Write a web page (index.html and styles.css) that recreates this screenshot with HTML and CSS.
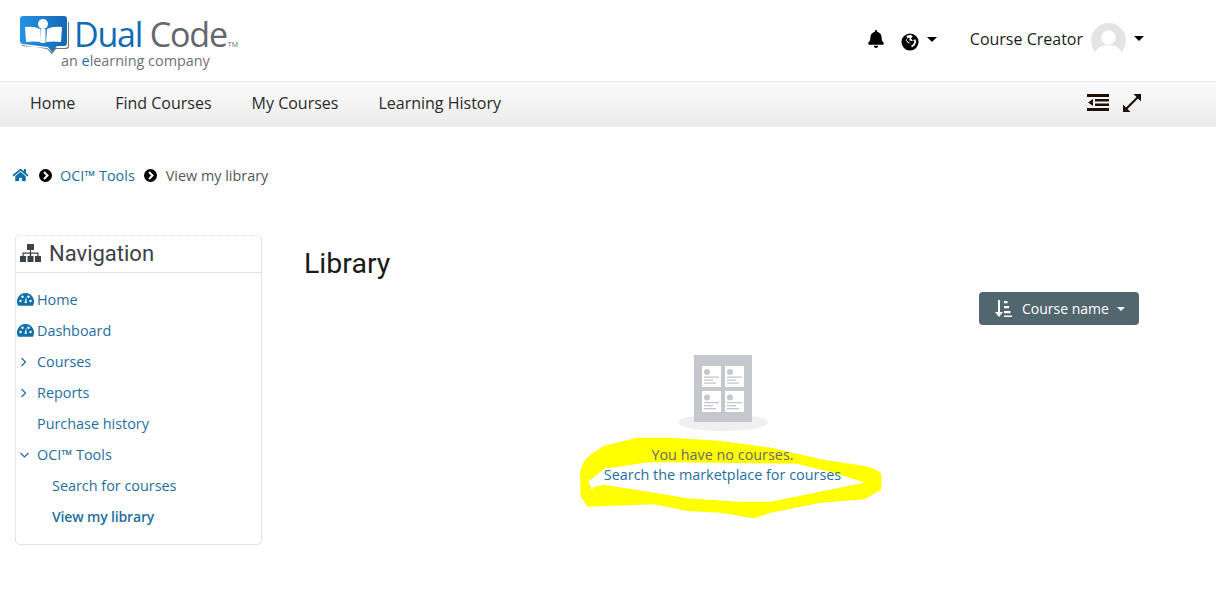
FILE: index.html
```html
<!DOCTYPE html>
<html lang="en">
<head>
    <meta charset="UTF-8">
    <title>Library</title>
    <link rel="stylesheet" href="styles.css">
</head>
<body>
    <header class="top-bar">
        <a class="logo">
            <svg class="logo-icon" width="50" height="40" viewBox="0 0 50 40">
                <defs>
                    <linearGradient id="logoBlue" x1="0" y1="0" x2="1" y2="0">
                        <stop offset="0" stop-color="#2393e6"/>
                        <stop offset="1" stop-color="#1468b4"/>
                    </linearGradient>
                </defs>
                <path d="M2 29l25 4 5 5 4-5h10q3 0 3-3V6h-1v23q0 3-3 3H35l-3 4-5-4-25-2z" fill="#6f7378"/>
                <path d="M3 0h41q3 0 3 3v24q0 3-3 3H37l-5 6-4-5L3 28q-3 0-3-3V3q0-3 3-3z" fill="url(#logoBlue)"/>
                <circle cx="23" cy="8" r="5" fill="#fff"/>
                <path d="M5 11q9-1 15 2l1 13q-7-1-15 0zM42 11q-9-1-15 2l-1 13q7-1 15 0z" fill="#fff"/>
                <path d="M20.500 13h5v14h-5z" fill="#fff"/>
            </svg>
            <span class="logo-text">
                <span class="logo-name"><span class="logo-dual">Dual</span> Code<span class="logo-tm">TM</span></span>
                <span class="logo-sub">an <b>e</b>learning company</span>
            </span>
        </a>
        <div class="user-tools">
            <svg class="bell" width="16" height="18" viewBox="0 0 448 512"><path d="M224 512c35 0 64-29 64-64H160c0 35 29 64 64 64zm215-150c-19-21-56-52-56-154 0-78-54-140-127-155V32a32 32 0 1 0-64 0v21C119 68 65 130 65 208c0 102-37 133-56 154-6 6-9 14-9 22 0 16 13 32 32 32h384c19 0 32-16 32-32 0-8-3-16-9-22z" fill="#000"/></svg>
            <svg class="globe" width="18" height="18" viewBox="0 0 20 20">
                <circle cx="10" cy="10" r="9.500" fill="#000"/>
                <path d="M6 3l5-1 2 2-2 2 2 2 3-1 1 3-2 4-3 2-1-4-3-1-3-3 2-2z" fill="#fff"/>
                <path d="M8 5l2 1-1 2 3 1 2-1 1 2-2 3-2 1-1-3-3-2-1-1z" fill="#000"/>
            </svg>
            <span class="caret caret-lang"></span>
            <span class="user-name">Course Creator</span>
            <svg class="avatar" width="35" height="35" viewBox="0 0 36 36">
                <defs><clipPath id="avatarClip"><circle cx="18" cy="18" r="18"/></clipPath></defs>
                <g clip-path="url(#avatarClip)">
                    <rect width="36" height="36" fill="#e4e4e4"/>
                    <circle cx="18" cy="15" r="7.500" fill="#fff"/>
                    <path d="M3 36q1-13 15-13t15 13z" fill="#fff"/>
                </g>
            </svg>
            <span class="caret caret-user"></span>
        </div>
    </header>

    <nav class="main-nav">
        <a>Home</a>
        <a>Find Courses</a>
        <a>My Courses</a>
        <a>Learning History</a>
        <div class="nav-tools">
            <svg width="22" height="17" viewBox="0 0 22 17"><path d="M0 0h22v3H0zM8 5h14v2.500H8zM8 9.500h14V12H8zM0 14h22v3H0zM6 5v7L1 8.500z" fill="#1c1008"/></svg>
            <svg width="18" height="18" viewBox="0 0 18 18"><path d="M10.500 0H18v7.500zM0 10.500V18h7.500z" fill="#1c1008"/><path d="M15 3L3 15" stroke="#1c1008" stroke-width="2.200"/></svg>
        </div>
    </nav>

    <div class="breadcrumb">
        <svg class="home-icon" width="17" height="14" viewBox="0 0 576 512"><path d="M280 148L96 300v164a16 16 0 0 0 16 16l112-1a16 16 0 0 0 16-16v-95a16 16 0 0 1 16-16h64a16 16 0 0 1 16 16v95a16 16 0 0 0 16 16l112 1a16 16 0 0 0 16-16V300L296 148a12 12 0 0 0-16 0zm292 103l-84-69V44a12 12 0 0 0-12-12h-56a12 12 0 0 0-12 12v72l-89-74a48 48 0 0 0-61 0L4 251a12 12 0 0 0-2 17l26 31a12 12 0 0 0 17 2L280 107a12 12 0 0 1 16 0l235 194a12 12 0 0 0 17 2l26-31a12 12 0 0 0-2-17z" fill="#0f6fa8"/></svg>
        <svg class="crumb-sep" width="13" height="13" viewBox="0 0 13 13"><circle cx="6.500" cy="6.500" r="6.500" fill="#000"/><path d="M5 3l3.500 3.500L5 10" fill="none" stroke="#fff" stroke-width="2"/></svg>
        <a>OCI™ Tools</a>
        <svg class="crumb-sep" width="13" height="13" viewBox="0 0 13 13"><circle cx="6.500" cy="6.500" r="6.500" fill="#000"/><path d="M5 3l3.500 3.500L5 10" fill="none" stroke="#fff" stroke-width="2"/></svg>
        <span>View my library</span>
    </div>

    <div class="page-body">
        <aside class="nav-card">
            <h2 class="nav-title">
                <svg width="21" height="18" viewBox="0 0 21 18"><path d="M7 0h7v6h-3v2.500h7.500V12H20.500h.5v6h-6v-6h2.300V9.800h-6.100V12H13.500v6h-6v-6h2.200V9.800H3.700V12H6v6H0v-6h2.500V8.500H10V6H7z" fill="#3d4148"/></svg>
                Navigation
            </h2>
            <ul class="nav-tree">
                <li>
                    <svg class="tree-icon" width="17" height="13" viewBox="0 0 17 13"><path d="M8.500 0A8.500 8.500 0 0 0 1.200 12.800h14.600A8.500 8.500 0 0 0 8.500 0z" fill="#0f6fa8"/><circle cx="3.500" cy="8" r="1.200" fill="#fff"/><circle cx="5.500" cy="3.800" r="1.200" fill="#fff"/><circle cx="11.500" cy="3.800" r="1.200" fill="#fff"/><circle cx="13.500" cy="8" r="1.200" fill="#fff"/><path d="M9.200 3.500l.5 6.500H7.500z" fill="#fff"/></svg>
                    <a>Home</a>
                </li>
                <li>
                    <svg class="tree-icon" width="17" height="13" viewBox="0 0 17 13"><path d="M8.500 0A8.500 8.500 0 0 0 1.200 12.800h14.600A8.500 8.500 0 0 0 8.500 0z" fill="#0f6fa8"/><circle cx="3.500" cy="8" r="1.200" fill="#fff"/><circle cx="5.500" cy="3.800" r="1.200" fill="#fff"/><circle cx="11.500" cy="3.800" r="1.200" fill="#fff"/><circle cx="13.500" cy="8" r="1.200" fill="#fff"/><path d="M9.200 3.500l.5 6.500H7.500z" fill="#fff"/></svg>
                    <a>Dashboard</a>
                </li>
                <li>
                    <svg class="tree-arrow" width="17" height="10" viewBox="0 0 17 10"><path d="M4.500 1l4 4-4 4" fill="none" stroke="#1f6f9f" stroke-width="1.200"/></svg>
                    <a>Courses</a>
                </li>
                <li>
                    <svg class="tree-arrow" width="17" height="10" viewBox="0 0 17 10"><path d="M4.500 1l4 4-4 4" fill="none" stroke="#1f6f9f" stroke-width="1.200"/></svg>
                    <a>Reports</a>
                </li>
                <li class="no-icon"><a>Purchase history</a></li>
                <li>
                    <svg class="tree-arrow" width="17" height="10" viewBox="0 0 17 10"><path d="M3.500 3l4 4 4-4" fill="none" stroke="#1f6f9f" stroke-width="1.200"/></svg>
                    <a>OCI™ Tools</a>
                </li>
                <li class="sub"><a>Search for courses</a></li>
                <li class="sub active"><a>View my library</a></li>
            </ul>
        </aside>

        <main class="content">
            <h1>Library</h1>
            <div class="toolbar">
                <button class="sort-btn">
                    <svg width="18" height="18" viewBox="0 0 18 18"><path d="M4 0h2v12h3l-4 5-4-5h3zM10 1h3.500v2.200H10zM10 6h5v2.200h-5zM10 11h6.500v2.200H10zM10 15.500h8V17h-8z" fill="#fff"/></svg>
                    Course name
                    <span class="caret caret-btn"></span>
                </button>
            </div>
            <div class="empty-state">
                <svg class="empty-pic" width="90" height="76" viewBox="0 0 90 76">
                    <ellipse cx="45" cy="67.500" rx="45" ry="8.500" fill="#efefef"/>
                    <rect x="16" y="0" width="58" height="67" fill="#c4c7cc"/>
                    <rect x="24" y="11" width="19" height="21" fill="#fff"/>
                    <rect x="47" y="11" width="19" height="21" fill="#fff"/>
                    <rect x="24" y="36" width="19" height="21" fill="#fff"/>
                    <rect x="47" y="36" width="19" height="21" fill="#fff"/>
                    <g fill="#c4c7cc">
                        <circle cx="29" cy="17" r="3"/><rect x="26" y="21.500" width="15" height="1.300"/><rect x="26" y="24.500" width="9" height="1.300"/><rect x="26" y="27.500" width="12" height="1.300"/>
                        <circle cx="52" cy="17" r="3"/><rect x="49" y="21.500" width="15" height="1.300"/><rect x="49" y="24.500" width="9" height="1.300"/><rect x="49" y="27.500" width="12" height="1.300"/>
                        <circle cx="29" cy="42.500" r="3"/><rect x="26" y="47" width="15" height="1.300"/><rect x="26" y="50" width="9" height="1.300"/><rect x="26" y="53" width="12" height="1.300"/>
                        <circle cx="52" cy="42.500" r="3"/><rect x="49" y="47" width="15" height="1.300"/><rect x="49" y="50" width="9" height="1.300"/><rect x="49" y="53" width="12" height="1.300"/>
                    </g>
                </svg>
                <div class="empty-text">
                    <svg class="highlight" width="302" height="82" viewBox="28 293 906 246"><path fill-rule="evenodd" d="M31 400Q38 365 63 347L102 322 200 298H300L450 308 600 328 750 363 880 383Q922 392 929 406V449L880 477 750 487 600 517 550 534 450 517 350 512 250 492 100 497 52 499 33 470zM50 425L65 465 70 445 100 440 200 455 350 480 500 490H600L700 470 800 450 895 430 780 395 680 370 240 365 100 385z" fill="#ffff00" stroke="#ffff00" stroke-width="6" stroke-linejoin="round"/></svg>
                    <p>You have no courses.</p>
                    <a>Search the marketplace for courses</a>
                </div>
            </div>
        </main>
    </div>
</body>
</html>
```

FILE: styles.css
```css
* {
    box-sizing: border-box;
}
body {
    margin: 0;
    background-color: #fff;
    font-family: "Open Sans", sans-serif;
    font-size: 14.4px;
    color: #333;
}
a {
    color: #1f6f9f;
    text-decoration: none;
}
.top-bar {
    height: 82px;
    display: flex;
    align-items: flex-start;
    justify-content: space-between;
    padding: 15px 72px 0 20px;
    border-bottom: 1px solid #e6e6e6;
}
.logo {
    display: flex;
    color: #63666a;
}
.logo-icon {
    margin-top: 1px;
    flex-shrink: 0;
}
.logo-text {
    display: flex;
    flex-direction: column;
    margin-left: 4px;
}
.logo-name {
    font-size: 34px;
    line-height: 26px;
    margin-top: 6px;
    letter-spacing: -1.2px;
    color: #63666a;
}
.logo-dual {
    color: #0f6cb6;
}
.logo-tm {
    font-size: 7px;
    line-height: 1;
    letter-spacing: 0;
    margin-left: 1px;
}
.logo-sub {
    font-size: 14.4px;
    line-height: 14px;
    margin-top: 6px;
    margin-left: -13px;
    color: #6d7176;
}
.logo-sub b {
    font-weight: 400;
    color: #0f6cb6;
}
.user-tools {
    display: flex;
    align-items: center;
    height: 48px;
    font-size: 16px;
}
.bell {
    margin-top: -1px;
}
.globe {
    margin-left: 17px;
    margin-top: 6px;
}
.caret {
    width: 0;
    height: 0;
    border-top: 5px solid #000;
    border-left: 5px solid transparent;
    border-right: 5px solid transparent;
}
.caret-lang {
    margin-left: 8px;
    margin-top: 1px;
}
.user-name {
    margin-left: 33px;
    color: #1c1c1c;
}
.avatar {
    margin-left: 8px;
    margin-top: 2px;
}
.caret-user {
    margin-left: 8px;
    margin-top: -2px;
}
.main-nav {
    height: 45px;
    display: flex;
    align-items: center;
    gap: 40px;
    padding: 0 75px 4px 30px;
    background: linear-gradient(#fbfbfb, #ebebeb);
    font-size: 16px;
}
.main-nav a {
    color: #2a2a2a;
}
.nav-tools {
    margin-left: auto;
    display: flex;
    align-items: center;
    gap: 14px;
}
.breadcrumb {
    display: flex;
    align-items: center;
    padding-left: 12px;
    margin-top: 38px;
    height: 20px;
    color: #555;
}
.crumb-sep {
    margin: 0 9px;
}
.home-icon + .crumb-sep {
    margin-left: 10px;
    margin-right: 8px;
}
.page-body {
    display: flex;
    align-items: flex-start;
    margin-top: 50px;
    padding: 0 77px 0 15px;
}
.nav-card {
    width: 247px;
    height: 310px;
    flex-shrink: 0;
    border: 1px solid #e3e3e3;
    border-top: 1px dotted #ddd;
    border-radius: 5px;
}
.nav-title {
    margin: 0;
    height: 37px;
    display: flex;
    align-items: center;
    gap: 8px;
    padding: 0 0 2px 4px;
    border-bottom: 1px solid #e3e3e3;
    font-family: Roboto, sans-serif;
    font-weight: 400;
    font-size: 22px;
    color: #3d4148;
}
.nav-tree {
    list-style: none;
    margin: 0 0 0 1px;
    padding: 11px 0 0 0;
}
.nav-tree li {
    display: flex;
    align-items: center;
    height: 31px;
    gap: 3px;
}
.nav-tree .no-icon {
    padding-left: 20px;
}
.nav-tree .sub {
    padding-left: 35px;
}
.nav-tree .active a {
    font-size: 14px;
    font-weight: 600;
    letter-spacing: -0.15px;
}
.content {
    flex: 1;
    padding-left: 42px;
}
.content h1 {
    margin: 11px 0 0;
    font-family: Roboto, sans-serif;
    font-weight: 400;
    font-size: 28.5px;
    line-height: 36px;
    color: #1a1a1a;
}
.toolbar {
    display: flex;
    justify-content: flex-end;
    margin-top: 10px;
}
.sort-btn {
    width: 160px;
    height: 33px;
    display: flex;
    align-items: center;
    padding: 0 0 0 15px;
    gap: 10px;
    border: none;
    border-radius: 4px;
    background-color: #51666f;
    color: #fff;
    font-family: "Open Sans", sans-serif;
    font-size: 14px;
}
.caret-btn {
    border-top-color: #fff;
    border-width: 4px 4px 0;
    margin-left: -2px;
}
.empty-state {
    display: flex;
    flex-direction: column;
    align-items: center;
    margin-top: 30px;
    margin-left: 2px;
}
.empty-pic {
    display: block;
}
.empty-text {
    position: relative;
    margin-top: 14px;
    line-height: 20px;
    text-align: center;
    color: #6a6a6a;
}
.empty-text p {
    position: relative;
    margin: 0;
}
.empty-text a {
    position: relative;
    display: block;
}
.highlight {
    position: absolute;
    left: -24px;
    top: -8px;
}
```
